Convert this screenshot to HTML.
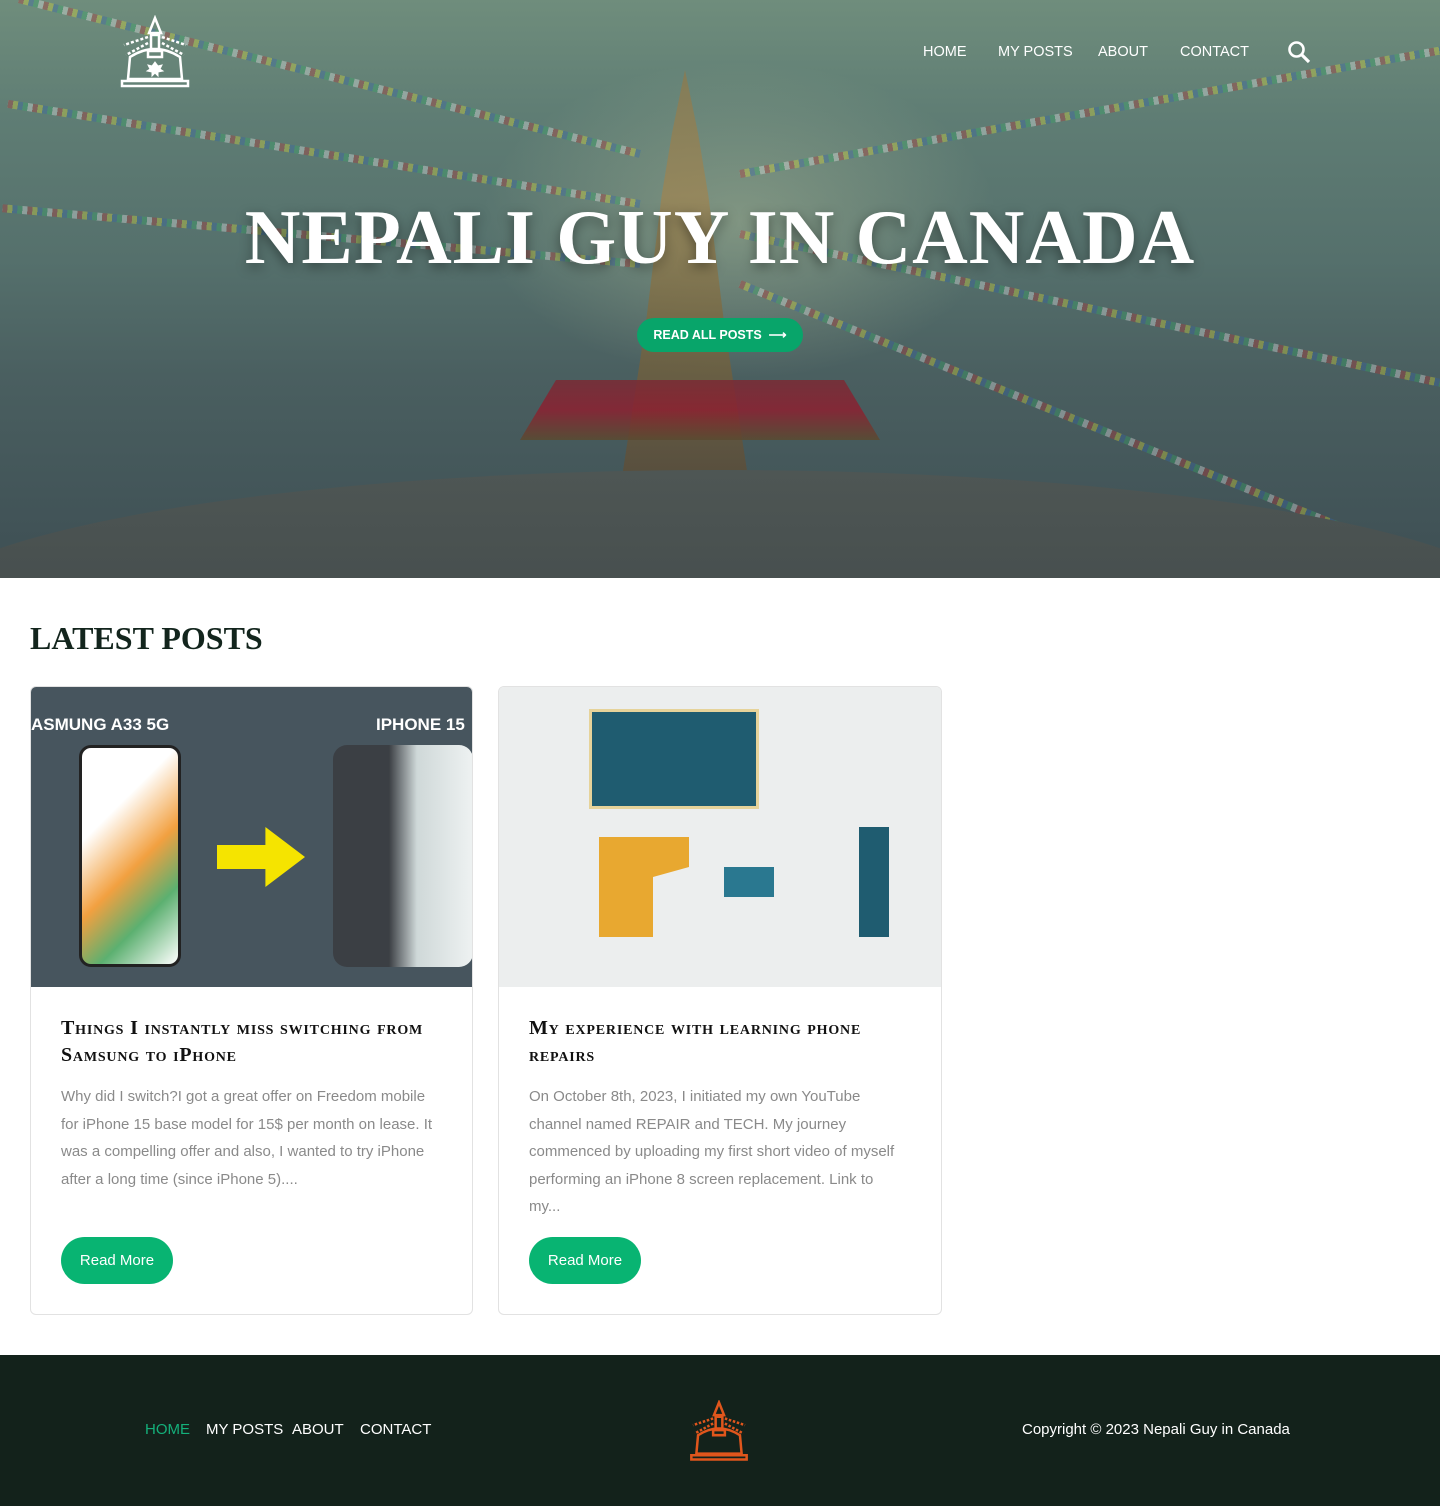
<!DOCTYPE html>
<html><head><meta charset="utf-8"><style>
*{margin:0;padding:0;box-sizing:border-box}
body{width:1440px;height:1506px;font-family:"Liberation Sans",sans-serif;background:#fff;position:relative;overflow:hidden}
.hero{position:absolute;left:0;top:0;width:1440px;height:578px;overflow:hidden;
background:linear-gradient(180deg,#6f8d7c 0%,#5f7d74 20%,#55706c 45%,#4a5f60 65%,#3e4f54 100%)}
.glow{position:absolute;left:480px;top:60px;width:520px;height:320px;background:radial-gradient(ellipse,rgba(190,200,160,.4),rgba(0,0,0,0) 70%)}
.spire{position:absolute;left:620px;top:70px;width:130px;height:420px;background:linear-gradient(180deg,#8a7a50,#9b8555 30%,#7a6840 60%,#5a4a36);clip-path:polygon(50% 0,60% 15%,68% 30%,80% 60%,100% 100%,0 100%,20% 60%,32% 30%,40% 15%);opacity:.8}
.band{position:absolute;left:520px;top:380px;width:360px;height:60px;background:linear-gradient(180deg,#7a2a34,#8c2030 50%,#5a4a30);clip-path:polygon(10% 0,90% 0,100% 100%,0 100%);opacity:.85}
.dome{position:absolute;left:-100px;top:470px;width:1640px;height:300px;border-radius:50% 50% 0 0;background:linear-gradient(180deg,#4e5654,#3c4446)}
.flags{position:absolute;height:8px;opacity:.35;background:repeating-linear-gradient(90deg,#b33 0 5px,#dd3 5px 10px,#36a 10px 15px,#3a6 15px 20px,#eee 20px 25px)}
.nav{position:absolute;top:44px;font-size:14.5px;color:#fff}
h1{position:absolute;left:0;width:1440px;top:193px;text-align:center;font-family:"Liberation Serif",serif;font-weight:bold;font-size:77px;color:#fff;letter-spacing:1px;text-shadow:0 4px 12px rgba(0,0,0,.4)}
.btn1{position:absolute;left:637px;top:318px;width:166px;height:34px;border-radius:17px;background:#08a56a;color:#fff;font-size:12.5px;font-weight:bold;line-height:34px;text-align:center}
h2{position:absolute;left:30px;top:620px;font-family:"Liberation Serif",serif;font-weight:bold;font-size:32px;color:#13251d}
.card{position:absolute;top:686px;height:629px;border:1px solid #e2e2e2;border-radius:6px;overflow:hidden;background:#fff}
.img{height:300px}
.card h3{font-family:"Liberation Serif",serif;font-variant:small-caps;font-weight:bold;font-size:20px;line-height:27px;margin:28px 38px 0 30px;color:#111;letter-spacing:.8px}
.card p{margin:14px 34px 0 30px;font-size:15px;line-height:27.5px;color:#8a8a8a}
.rm{position:absolute;left:30px;top:550px;width:112px;height:47px;border-radius:24px;background:#08b472;color:#fff;font-size:15px;line-height:47px;text-align:center}
footer{position:absolute;left:0;top:1355px;width:1440px;height:151px;background:#13221b;color:#fff;font-size:15px}
footer span{position:absolute;top:66px}
</style></head><body>
<div class="hero">
<div class="glow"></div>
<div class="flags" style="left:0;top:150px;width:640px;transform:rotate(14deg);transform-origin:right"></div>
<div class="flags" style="left:0;top:200px;width:640px;transform:rotate(9deg);transform-origin:right"></div>
<div class="flags" style="left:0;top:260px;width:640px;transform:rotate(5deg);transform-origin:right"></div>
<div class="flags" style="left:740px;top:170px;width:720px;transform:rotate(-10deg);transform-origin:left"></div>
<div class="flags" style="left:740px;top:230px;width:720px;transform:rotate(12deg);transform-origin:left"></div>
<div class="flags" style="left:740px;top:280px;width:720px;transform:rotate(22deg);transform-origin:left"></div>
<div class="spire"></div>
<div class="band"></div>
<div class="dome"></div>
<svg style="position:absolute;left:118px;top:15px" width="74" height="74" viewBox="0 0 74 74" fill="none" stroke="#fff" stroke-width="2.5">
<path d="M37 3 L31 18 L43 18 Z M33 20 h8 v14 h-8z M30 36 h14 v6 h-14z M12 42 Q37 26 62 42 L64 64 H10 Z M4 66 H70 V71 H4Z"/>
<path d="M30 22 L6 30 M30 28 L8 40 M44 22 L68 30 M44 28 L66 40" stroke-dasharray="3 2"/>
<path d="M37 47 l3 4 4-1-2 4 3 2-5 1 0 4-3-3-3 3 0-4-5-1 3-2-2-4 4 1z" fill="#fff" stroke-width="1"/>
</svg>
<div class="nav" style="left:923px">HOME</div>
<div class="nav" style="left:998px">MY POSTS</div>
<div class="nav" style="left:1098px">ABOUT</div>
<div class="nav" style="left:1180px">CONTACT</div>
<svg style="position:absolute;left:1287px;top:40px" width="24" height="24" viewBox="0 0 24 24"><circle cx="9.5" cy="9.5" r="7" stroke="#fff" stroke-width="2.6" fill="none"/><path d="M14.5 14.5 L22 22" stroke="#fff" stroke-width="3.2"/></svg>
<h1>NEPALI GUY IN CANADA</h1>
<div class="btn1">READ ALL POSTS &nbsp;⟶</div>
</div>
<h2>LATEST POSTS</h2>
<div class="card" style="left:30px;width:443px">
<div class="img" style="background:#47555e;position:relative;color:#fff;font-weight:bold;font-size:17px">
<span style="position:absolute;left:0;top:28px">ASMUNG A33 5G</span><span style="position:absolute;left:345px;top:28px">IPHONE 15</span>
<div style="position:absolute;left:48px;top:58px;width:102px;height:222px;border-radius:12px;background:linear-gradient(135deg,#fff 30%,#f2a040 55%,#5cb070 75%,#fff);border:3px solid #222"></div>
<div style="position:absolute;left:302px;top:58px;width:140px;height:222px;border-radius:14px;background:linear-gradient(90deg,#3b3f44 40%,#cfd8d8 60%,#eef2f2)"></div>
<div style="position:absolute;left:186px;top:140px;width:88px;height:60px;background:#f5e400;clip-path:polygon(0 30%,55% 30%,55% 0,100% 50%,55% 100%,55% 70%,0 70%)"></div>
</div>
<h3>Things I instantly miss switching from Samsung to iPhone</h3>
<p>Why did I switch?I got a great offer on Freedom mobile for iPhone 15 base model for 15$ per month on lease. It was a compelling offer and also, I wanted to try iPhone after a long time (since iPhone 5)....</p>
<div class="rm">Read More</div>
</div>
<div class="card" style="left:498px;width:444px">
<div class="img" style="background:#eceeee;position:relative">
<div style="position:absolute;left:90px;top:22px;width:170px;height:100px;background:#1f5c70;border:3px solid #e6d39a"></div>
<div style="position:absolute;left:100px;top:150px;width:90px;height:100px;background:#e8a830;clip-path:polygon(0 0,100% 0,100% 30%,60% 40%,60% 100%,0 100%)"></div>
<div style="position:absolute;left:360px;top:140px;width:30px;height:110px;background:#1f5c70"></div>
<div style="position:absolute;left:225px;top:180px;width:50px;height:30px;background:#2a7890"></div>
</div>
<h3>My experience with learning phone repairs</h3>
<p>On October 8th, 2023, I initiated my own YouTube channel named REPAIR and TECH. My journey commenced by uploading my first short video of myself performing an iPhone 8 screen replacement. Link to my...</p>
<div class="rm">Read More</div>
</div>
<footer>
<span style="left:145px;color:#14b07a">HOME</span>
<span style="left:206px">MY POSTS</span>
<span style="left:292px">ABOUT</span>
<span style="left:360px">CONTACT</span>
<svg style="position:absolute;left:688px;top:45px" width="62" height="62" viewBox="0 0 74 74" fill="none" stroke="#e0561c" stroke-width="3">
<path d="M37 3 L31 18 L43 18 Z M33 20 h8 v14 h-8z M30 36 h14 v6 h-14z M12 42 Q37 26 62 42 L64 64 H10 Z M4 66 H70 V71 H4Z"/>
<path d="M30 22 L6 30 M30 28 L8 40 M44 22 L68 30 M44 28 L66 40" stroke-dasharray="3 2"/>
</svg>
<span style="left:1022px">Copyright © 2023 Nepali Guy in Canada</span>
</footer>
</body></html>
